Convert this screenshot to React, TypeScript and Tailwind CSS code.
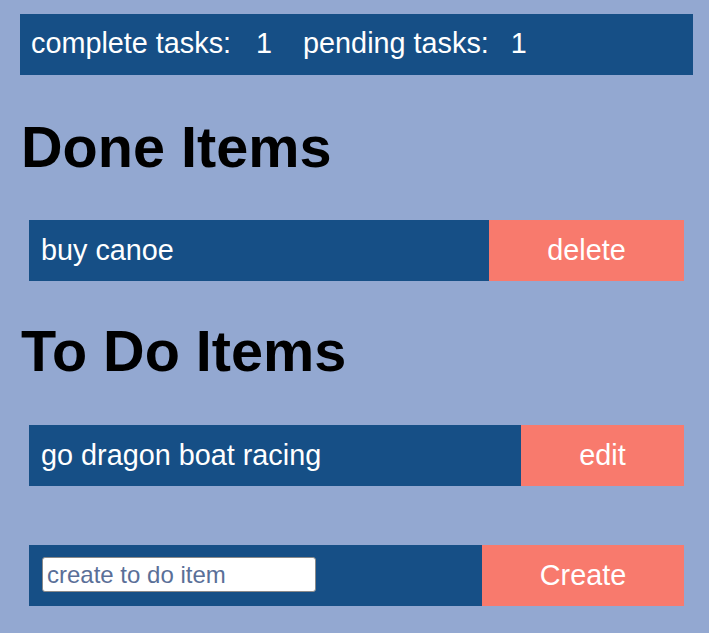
import React from "react";

export default function App() {
  return (
    <div className="min-h-screen bg-[#93a8d1] pt-[14px] pl-[20px] font-['Liberation_Sans',Arial,sans-serif] text-white">
      <div className="flex h-[61px] w-[673px] items-center bg-[#164f86] pl-[11px] pb-[2px] text-[28.8px]">
        <span>complete tasks:</span>
        <span className="ml-[25px]">1</span>
        <span className="ml-[31px]">pending tasks:</span>
        <span className="ml-[22px]">1</span>
      </div>

      <h1 className="mt-[44px] ml-[1px] text-[57.6px] font-bold leading-none text-black">Done Items</h1>

      <div className="mt-[43px] ml-[9px] flex h-[61px] w-[655px] text-[28.8px]">
        <div className="flex flex-1 items-center bg-[#164f86] pl-[12px]">buy canoe</div>
        <div className="flex w-[195px] items-center justify-center bg-[#f87a6d]">delete</div>
      </div>

      <h1 className="mt-[42px] ml-[1px] text-[57.6px] font-bold leading-none text-black">To Do Items</h1>

      <div className="mt-[45px] ml-[9px] flex h-[61px] w-[655px] text-[28.8px]">
        <div className="flex flex-1 items-center bg-[#164f86] pl-[12px]">go dragon boat racing</div>
        <div className="flex w-[163px] items-center justify-center bg-[#f87a6d]">edit</div>
      </div>

      <div className="mt-[59px] ml-[9px] flex h-[61px] w-[655px] text-[28.8px]">
        <div className="flex flex-1 items-center bg-[#164f86] pl-[13px] pb-[2px]">
          <input
            type="text"
            placeholder="create to do item"
            className="h-[35px] w-[274px] rounded-[3px] border border-[#8a8a8a] bg-white px-[4px] text-[24px] text-black placeholder:text-[#5a6f98] outline-none"
          />
        </div>
        <div className="flex w-[202px] items-center justify-center bg-[#f87a6d]">Create</div>
      </div>
    </div>
  );
}
